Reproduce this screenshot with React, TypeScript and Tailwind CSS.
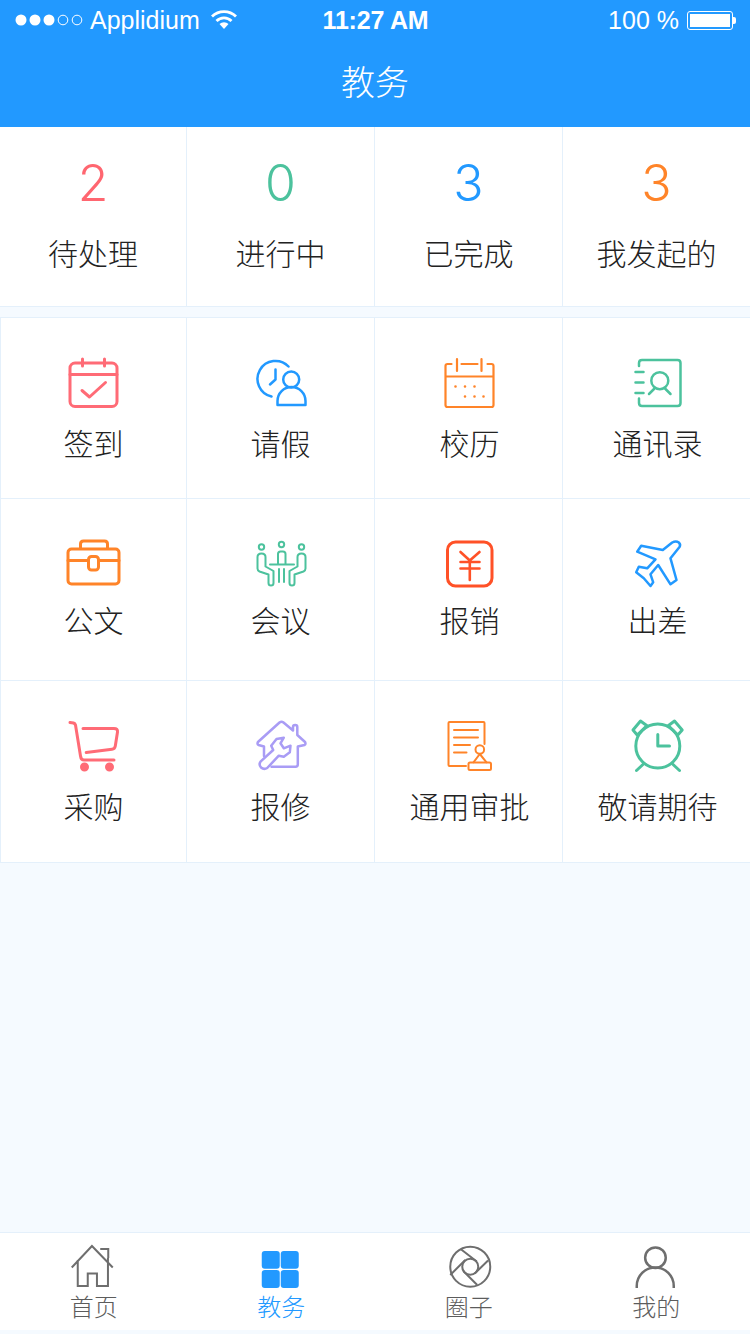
import React from "react";

const CJK = "font-['Noto_Sans_CJK_SC','Noto_Sans',sans-serif]";

const stats = [
  { n: "2", label: "待处理", color: "text-[#ff6670]" },
  { n: "0", label: "进行中", color: "text-[#4cc29d]" },
  { n: "3", label: "已完成", color: "text-[#2299ff]" },
  { n: "3", label: "我发起的", color: "text-[#ff8429]" },
];

const Ico: React.FC<{ box: string; color: string; sw?: number; children: React.ReactNode }> = ({
  box,
  color,
  sw = 2.5,
  children,
}) => (
  <svg
    width="60"
    height="60"
    viewBox={box}
    fill="none"
    stroke={color}
    strokeWidth={sw}
    strokeLinecap="round"
    strokeLinejoin="round"
    className="block"
  >
    {children}
  </svg>
);

const row1 = [
  {
    label: "签到",
    icon: (
      <Ico box="63.5 353 60 60" color="#ff6b76" sw={3}>
        <rect x="69.5" y="363" width="47" height="43.5" rx="5" />
        <path d="M69.5 374.5H116.5M82 359V366M104 359V366M81.5 390.5L89 397L105 382.5" />
      </Ico>
    ),
  },
  {
    label: "请假",
    icon: (
      <Ico box="250.5 353 60 60" color="#2299ff">
        <path d="M288 366.5A18 18 0 1 0 271 396.5" />
        <path d="M275 369.5V379.5L269.5 384.5" />
        <circle cx="290.7" cy="379.5" r="8" />
        <path d="M277 405V401A14 14 0 0 1 305 401V405Z" />
      </Ico>
    ),
  },
  {
    label: "校历",
    icon: (
      <Ico box="438.5 353 60 60" color="#ff8429" sw={2.2}>
        <path d="M451 364H447Q445 364 445 366V405Q445 407 447 407H491Q493 407 493 405V366Q493 364 491 364H487M461 364H477M456.5 359V371M481 359V371M445 376.5H493" />
        <path
          d="M455 386.5h.01M464.5 386.5h.01M474 386.5h.01M464.5 396.5h.01M474 396.5h.01M483 396.5h.01"
          strokeWidth={2.6}
        />
      </Ico>
    ),
  },
  {
    label: "通讯录",
    icon: (
      <Ico box="626.5 353 60 60" color="#4cc29d">
        <path d="M638.5 366V363Q638.5 360 641.5 360H677Q680 360 680 363V403Q680 406 677 406H641.5Q638.5 406 638.5 403V398.5" />
        <path d="M635 372H643M635 382.5H643M635 393H643" />
        <circle cx="659.3" cy="380.7" r="8.5" />
        <path d="M648.5 394L654 388.5M670 394L664.5 388.5" />
      </Ico>
    ),
  },
];

const row2 = [
  {
    label: "公文",
    icon: (
      <Ico box="63.5 534 60 60" color="#ff8429" sw={3}>
        <rect x="67.5" y="549" width="51" height="35" rx="3.5" />
        <path d="M80 548.5V544Q80 541 83 541H104Q107 541 107 544V548.5M67.5 560.5H88M98.5 560.5H118.5" />
        <rect x="88" y="556.5" width="10" height="13.5" rx="3" />
      </Ico>
    ),
  },
  {
    label: "会议",
    icon: (
      <Ico box="250.5 534 60 60" color="#4cc29d" sw={2}>
        <circle cx="261" cy="547" r="2.7" />
        <circle cx="281" cy="544.5" r="2.7" />
        <circle cx="301" cy="547" r="2.7" />
        <path d="M277.5 564V554Q277.5 551.5 280 551.5H282.5Q285 551.5 285 554V564M269.5 564.5H293.5M278.5 569V582M283.5 569V582" />
        <path d="M257 557Q257 553.5 261 553.5Q265 553.5 265 557V566.5L273 571V583Q273 585.5 270.5 585.5Q268 585.5 268 583V574.5L259 571.5Q257 570.5 257 568.5Z" />
        <path d="M305 557Q305 553.5 301 553.5Q297 553.5 297 557V566.5L289 571V583Q289 585.5 291.5 585.5Q294 585.5 294 583V574.5L303 571.5Q305 570.5 305 568.5Z" />
      </Ico>
    ),
  },
  {
    label: "报销",
    icon: (
      <Ico box="438.5 534 60 60" color="#ff5127" sw={3}>
        <rect x="447" y="542" width="44.5" height="44" rx="8" />
        <path d="M460 552L469.3 560.5L479 552M460 562H479M460 568.5H479M469.3 561V580" strokeWidth={2.6} />
      </Ico>
    ),
  },
  {
    label: "出差",
    icon: (
      <Ico box="626.5 534 60 60" color="#2299ff">
        <path d="M679 547L670 558.3L676 580L670 584.3L657.7 565L650 574.3L652.7 582.3L650 586L643.3 578.3L635.7 572.3L638.3 566.7L646.7 568.3L655 559.3L636.7 551.7L640.7 545.7L662.3 550L671.7 542.5Q675.5 540.5 678.3 542.5Q680.5 544.5 679 547Z" />
      </Ico>
    ),
  },
];

const row3 = [
  {
    label: "采购",
    icon: (
      <Ico box="63.5 715 60 60" color="#ff6b76" sw={3}>
        <path d="M69.5 722.5L73 723Q74.5 723.5 75 725L80 756Q80.5 760 83.5 760H113.5" />
        <path d="M82.5 728.5H113.5Q117.5 728.5 117 732L114.8 746Q114.3 749 111.5 749.3L85.7 752.5" />
        <circle cx="84" cy="767" r="3" fill="#ff6b76" />
        <circle cx="109" cy="767" r="3" fill="#ff6b76" />
      </Ico>
    ),
  },
  {
    label: "报修",
    icon: (
      <Ico box="250.5 715 60 60" color="#a99cf5">
        <path d="M263.5 756V746.5L258 745Q256 743.5 258 741.5L279 722.5Q281 721 283 722.5L292.5 730.5V727Q292.5 725 294.7 725Q296.8 725 296.8 727V735L304 741.5Q306 743.5 304 745L297.3 746.5V764.5Q297.3 766.7 295 766.7H271" />
        <path d="M260 761.7L272.7 750L270.7 745.7L276 739L283.3 737.7L280 743.3L283.3 748.3L290 745.7L289.3 752.3L283.3 756.7L278.3 755.7L266.7 768Q263.5 770 260.5 767.5Q258 764.5 260 761.7Z" />
      </Ico>
    ),
  },
  {
    label: "通用审批",
    icon: (
      <Ico box="438.5 715 60 60" color="#ff8429" sw={2}>
        <path d="M484 744V723Q484 722 483 722H449Q448 722 448 723V765Q448 766 449 766H465.5" />
        <path d="M453.5 730H477.5M453.5 737.5H477.5M453.5 745H469.5M453.5 752.5H466" />
        <circle cx="479.3" cy="749.5" r="4.3" />
        <path d="M479.3 754L473 762.3M479.3 754L486 762.3" />
        <rect x="468" y="762.5" width="22.5" height="7.5" rx="1.5" />
      </Ico>
    ),
  },
  {
    label: "敬请期待",
    icon: (
      <Ico box="626.5 715 60 60" color="#4cc29d" sw={3}>
        <circle cx="657.3" cy="746" r="22" />
        <path d="M657.3 734.5V746H669M643.5 763.5L636 770.5M671.5 763.5L679 770.5" />
        <path d="M632.5 730L640 721L646.5 725.7L636.7 735Z" />
        <path d="M681.7 730L674 721L667.7 725.7L677.3 735Z" />
      </Ico>
    ),
  },
];

const tabs = [
  {
    label: "首页",
    text: "text-[#5c5c5c]",
    icon: (
      <svg width="60" height="60" viewBox="63.75 1235 60 60" fill="none" stroke="#6e6e6e" strokeWidth="2" className="block">
        <path d="M71.5 1267.5L91.7 1246L112.5 1267.5M100 1249H108V1258M77.5 1260V1286H87.5V1273.5H96.7V1286H107.7V1258" />
      </svg>
    ),
  },
  {
    label: "教务",
    text: "text-[#2299ff]",
    icon: (
      <svg width="60" height="60" viewBox="251.25 1235 60 60" fill="#2299ff" className="block">
        <rect x="262" y="1251" width="18" height="17.7" rx="3" />
        <rect x="281" y="1251" width="18" height="17.7" rx="3" />
        <rect x="262" y="1270" width="18" height="18" rx="3" />
        <rect x="281" y="1270" width="18" height="18" rx="3" />
      </svg>
    ),
  },
  {
    label: "圈子",
    text: "text-[#5c5c5c]",
    icon: (
      <svg width="60" height="60" viewBox="438.75 1235 60 60" fill="none" stroke="#6e6e6e" strokeWidth="2" className="block">
        <circle cx="470" cy="1266.7" r="20" />
        <circle cx="470" cy="1266.7" r="8" />
        <path d="M461 1249.5L476.5 1261.5M487.8 1260.5L474.5 1273.5M477 1285L463 1271M450 1275L465 1260" />
      </svg>
    ),
  },
  {
    label: "我的",
    text: "text-[#5c5c5c]",
    icon: (
      <svg width="60" height="60" viewBox="626.25 1235 60 60" fill="none" stroke="#6e6e6e" strokeWidth="2.5" className="block">
        <circle cx="655.7" cy="1257.7" r="10.3" />
        <path d="M637 1288V1286A18.5 18.5 0 0 1 674 1286V1288" />
      </svg>
    ),
  },
];

const Row: React.FC<{
  items: { label: string; icon: React.ReactNode }[];
  h: string;
  pt: string;
  mt: string;
}> = ({ items, h, pt, mt }) => (
  <>
    {items.map((it, i) => (
      <div key={it.label} className={`flex flex-col items-center border-l border-t border-[#e4f0fb] bg-white ${h} ${pt}`}>
        {it.icon}
        <div className={`text-[30px] leading-[40px] font-light text-[#222222] whitespace-nowrap ${mt} ${i > 1 ? "pl-[2px]" : ""}`}>
          {it.label}
        </div>
      </div>
    ))}
  </>
);

export default function App() {
  return (
    <div className={`flex h-[1334px] w-[750px] flex-col overflow-hidden bg-[#f5faff] ${CJK}`}>
      <header className="h-[127px] shrink-0 bg-[#2299ff] text-white">
        <div className="flex h-[40px] items-center justify-between pl-[15px] pr-[14px] font-['Liberation_Sans',sans-serif] text-[25px]">
          <div className="flex w-[260px] items-center">
            <svg width="68" height="14" viewBox="0 0 68 14" className="block">
              <circle cx="6" cy="7" r="5.5" fill="#fff" />
              <circle cx="20" cy="7" r="5.5" fill="#fff" />
              <circle cx="34" cy="7" r="5.5" fill="#fff" />
              <circle cx="48" cy="7" r="4.8" fill="none" stroke="#fff" strokeWidth="1" />
              <circle cx="62" cy="7" r="4.8" fill="none" stroke="#fff" strokeWidth="1" />
            </svg>
            <span className="ml-[7px] leading-none">Applidium</span>
            <svg width="28" height="20" viewBox="0 0 28 20" fill="none" stroke="#fff" strokeWidth="2.8" className="mb-[3px] ml-[10px] block">
              <path d="M2 7.5A17 17 0 0 1 26 7.5" />
              <path d="M6.5 12A10.5 10.5 0 0 1 21.5 12" />
              <path d="M14 20L9.5 15A6.5 6.5 0 0 1 18.5 15Z" fill="#fff" stroke="none" />
            </svg>
          </div>
          <span className="font-bold leading-none tracking-[-0.2px]">11:27 AM</span>
          <div className="flex w-[260px] items-center justify-end">
            <span className="leading-none">100 %</span>
            <div className="ml-[8px] flex items-center">
              <div className="h-[19px] w-[46px] rounded-[3px] border border-white p-[2px]">
                <div className="h-full w-full bg-white" />
              </div>
              <div className="h-[7px] w-[3px] rounded-r-[2px] bg-white" />
            </div>
          </div>
        </div>
        <div className="mt-[1px] text-center text-[34px] leading-[80px] font-light">教务</div>
      </header>

      <section className="grid h-[180px] shrink-0 grid-cols-[186px_188px_188px_188px] border-b border-[#e4f0fb] bg-white">
        {stats.map((s, i) => (
          <div key={s.label} className={`flex flex-col items-center ${i > 0 ? "border-l border-[#e4f0fb]" : ""}`}>
            <div className={`mt-[26px] font-['Inter',sans-serif] text-[50px] leading-[60px] font-light ${s.color}`}>{s.n}</div>
            <div className="mt-[19px] text-[30px] leading-[40px] font-light whitespace-nowrap text-[#222222]">{s.label}</div>
          </div>
        ))}
      </section>

      <section className="mt-[10px] grid shrink-0 grid-cols-[186px_188px_188px_188px] border-b border-[#e4f0fb]">
        <Row items={row1} h="h-[181px]" pt="pt-[35px]" mt="mt-[9px]" />
        <Row items={row2} h="h-[182px]" pt="pt-[35px]" mt="mt-[5px]" />
        <Row items={row3} h="h-[182px]" pt="pt-[34px]" mt="mt-[10px]" />
      </section>

      <div className="flex-1" />

      <nav className="mb-[4px] grid h-[98px] shrink-0 grid-cols-4 border-t border-[#e4f0fb] bg-white">
        {tabs.map((t) => (
          <div key={t.label} className="flex flex-col items-center pt-[2px]">
            {t.icon}
            <div className={`mt-[-5px] text-[24px] leading-[32px] font-light ${t.text}`}>{t.label}</div>
          </div>
        ))}
      </nav>
    </div>
  );
}
